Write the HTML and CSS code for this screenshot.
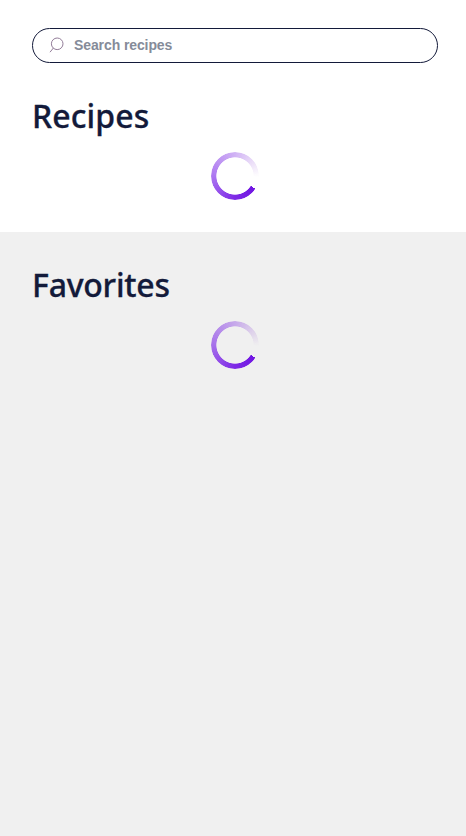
FILE: index.html
```html
<!DOCTYPE html>
<html lang="en">
<head>
<meta charset="utf-8">
<title>Recipes</title>
<link rel="stylesheet" href="styles.css">
</head>
<body>
<main class="panel">
  <label class="search">
    <svg class="search-icon" viewBox="0 0 16 16" aria-hidden="true"><circle cx="8.2" cy="5.8" r="5.8"/><path d="M4.4 10 1 14.2"/></svg>
    <input class="search-input" type="text" placeholder="Search recipes">
  </label>
  <h1 class="title recipes">Recipes</h1>
  <div class="spinner"></div>
</main>
<section class="panel favorites">
  <h2 class="title favs">Favorites</h2>
  <div class="spinner"></div>
</section>
</body>
</html>
```

FILE: styles.css
```css
* { box-sizing: border-box; }
body {
  margin: 0;
  min-height: 100vh;
  display: flex;
  flex-direction: column;
  background: #fff;
  color: #131a3a;
}
.panel { padding: 28px 28px 32px 32px; }
.favorites {
  flex: 1;
  padding-top: 32px;
  background: #f0f0f0;
}
.search {
  display: flex;
  align-items: center;
  height: 35px;
  margin-bottom: 31px;
  padding: 0 16px;
  border: 1px solid #131a3a;
  border-radius: 18px;
}
.search-icon {
  width: 16px;
  height: 16px;
  margin-right: 9px;
  overflow: visible;
  fill: none;
  stroke: #937d99;
  stroke-width: 1;
}
.search-input {
  flex: 1;
  min-width: 0;
  padding: 0 0 2px;
  border: 0;
  outline: 0;
  background: transparent;
  font: bold 14px "Liberation Sans", sans-serif;
  letter-spacing: -.1px;
}
.search-input::placeholder { color: #858b99; opacity: 1; }
.title {
  margin: 0 0 15px;
  font: 500 32px/43px "Noto Sans", sans-serif;
  -webkit-text-stroke: .3px currentColor;
}
.recipes { letter-spacing: .1px; }
.favs {
  margin-top: -1px;
  letter-spacing: -.25px;
}
.spinner {
  width: 48px;
  height: 48px;
  margin: 0 auto;
  border-radius: 50%;
  background: conic-gradient(from 122deg, #7015e2 0deg, #7e2ae6 60deg, rgba(111, 19, 230, .57) 150deg, rgba(111, 19, 223, .32) 238deg, rgba(111, 19, 200, .12) 295deg, transparent 330deg);
  -webkit-mask: radial-gradient(circle, transparent 18.3px, #000 19px);
  mask: radial-gradient(circle, transparent 18.3px, #000 19px);
}
```
